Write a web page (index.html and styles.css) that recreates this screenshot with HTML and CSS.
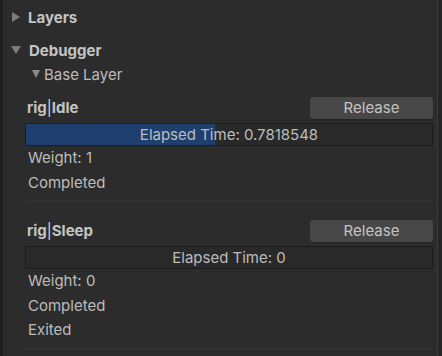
FILE: index.html
```html
<!DOCTYPE html>
<html lang="en">
<head>
    <meta charset="UTF-8">
    <title>Animation Debugger</title>
    <link rel="stylesheet" href="styles.css">
</head>
<body>
<div class="panel">
    <div class="content">
        <div class="foldout foldout-layers">
            <span class="arrow arrow-right"></span>
            <span class="foldout-title">Layers</span>
        </div>

        <div class="foldout foldout-debugger">
            <span class="arrow arrow-down"></span>
            <span class="foldout-title">Debugger</span>
        </div>

        <div class="sub-foldout">
            <span class="arrow-small"></span>
            <span>Base Layer</span>
        </div>

        <div class="clip">
            <div class="clip-head">
                <span class="clip-name">rig<span class="pipe">|</span>Idle</span>
                <button class="release">Release</button>
            </div>
            <div class="progress">
                <div class="progress-fill" style="width: 46.6%"></div>
                <span class="progress-label">Elapsed Time: 0.7818548</span>
            </div>
            <div class="line">Weight: 1</div>
            <div class="line">Completed</div>
        </div>

        <div class="clip">
            <div class="clip-head">
                <span class="clip-name">rig<span class="pipe">|</span>Sleep</span>
                <button class="release">Release</button>
            </div>
            <div class="progress">
                <div class="progress-fill" style="width: 0%"></div>
                <span class="progress-label">Elapsed Time: 0</span>
            </div>
            <div class="line">Weight: 0</div>
            <div class="line">Completed</div>
            <div class="line">Exited</div>
        </div>
    </div>
    <div class="scrollbar"></div>
</div>
</body>
</html>
```

FILE: styles.css
```css
html, body {
    margin: 0;
    padding: 0;
    height: 100%;
    background-color: #2c2c2c;
}
body {
    font-family: Inter, "Noto Sans", sans-serif;
    font-size: 15px;
    color: #bdbdbd;
}
.panel { display: flex; height: 356px; border-left: 3px solid #1f1f1f; box-sizing: border-box; overflow: hidden; }
.content { flex: 1; padding: 0 4px 0 8px; }
.scrollbar { width: 4px; border-left: 1px solid #3a3a3a; background-color: #262626; }

.foldout { display: flex; align-items: center; gap: 8px; height: 24px; font-weight: bold; color: #c4c4c4; }
.foldout-layers { margin-top: 5px; }
.foldout-debugger { margin-top: 9px; }
.foldout-title { font-size: 15px; }
.arrow { width: 0; height: 0; display: inline-block; }
.arrow-right { border-top: 5px solid transparent; border-bottom: 5px solid transparent; border-left: 8px solid #7c7c7c; margin-left: 1px; }
.arrow-down { border-left: 5px solid transparent; border-right: 5px solid transparent; border-top: 8px solid #7c7c7c; }

.sub-foldout { display: flex; align-items: center; gap: 4px; height: 24px; padding-left: 21px; }
.arrow-small { width: 0; height: 0; border-left: 4px solid transparent; border-right: 4px solid transparent; border-top: 8px solid #8a8a8a; }

.clip { margin: 0 0 0 14px; padding-bottom: 6px; border-bottom: 1px solid #343434; }
.clip + .clip { margin-top: 17px; padding-bottom: 5px; }
.sub-foldout + .clip { padding-top: 10px; }

.clip-head { display: flex; justify-content: space-between; align-items: center; height: 23px; }
.clip-name { font-weight: bold; color: #c4c4c4; padding-left: 2px; }
.pipe { font-weight: normal; color: #d6d6d6; }
.release { width: 123px; height: 22px; border: none; border-radius: 3px; background-color: #474747; color: #c4c4c4; font-family: inherit; font-size: 15px; padding: 0; box-shadow: 0 1px 0 #232323; }

.progress { position: relative; margin-top: 4px; height: 23px; border: 1px solid #1c1c1c; background-color: #292929; box-sizing: border-box; }
.progress-fill { height: 100%; background-color: #1f3f6e; }
.progress-label { position: absolute; left: 0; right: 0; top: 0; bottom: 0; display: flex; align-items: center; justify-content: center; color: #bdbdbd; }

.line { height: 24.5px; line-height: 24.5px; padding-left: 3px; }
```
